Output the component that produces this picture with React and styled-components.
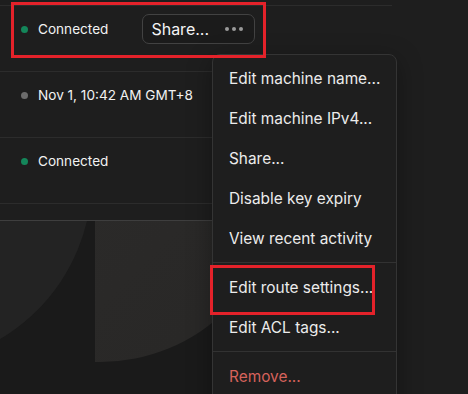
import React from "react";
import styled, { createGlobalStyle } from "styled-components";

const Global = createGlobalStyle`
  html, body { margin: 0; padding: 0; background: #1e1e1e; }
  body { font-family: Inter, "Noto Sans", "Liberation Sans", sans-serif; -webkit-font-smoothing: antialiased; }
  #root { width: 468px; height: 394px; overflow: hidden; }
`;

const Page = styled.div`
  position: relative;
  width: 468px;
  height: 394px;
  overflow: hidden;
  background: #1e1e1e;
  display: flex;
  flex-direction: column;
  padding-top: 5px;
  box-sizing: border-box;
`;

const Table = styled.div`
  width: 392px;
  display: flex;
  flex-direction: column;
`;

const Row = styled.div`
  height: 66px;
  box-sizing: border-box;
  border-top: 1px solid #2c2c2c;
  padding: 8px 0 0 21px;
`;

const Cell = styled.div`
  height: 30px;
  display: flex;
  align-items: center;
  gap: 10px;
`;

const Dot = styled.span`
  width: 7px;
  height: 7px;
  border-radius: 50%;
  background: ${(p) => (p.$online ? "#14865a" : "#6c6c6c")};
  flex: none;
`;

const Status = styled.span`
  font-size: 13.6px;
  color: #f2f2f2;
`;

const Spacer = styled.div`
  width: 14px;
`;

const ShareButton = styled.div`
  height: 30px;
  width: 113px;
  box-sizing: border-box;
  border: 1px solid #424242;
  border-radius: 7px;
  background: #1b1b1b;
  display: flex;
  align-items: center;
  padding: 0 11px 0 8px;
  justify-content: space-between;
  font-size: 16px;
  color: #f4f4f4;
`;

const Dots = styled.span`
  display: flex;
  gap: 3px;
  & > i {
    width: 4px;
    height: 4px;
    border-radius: 50%;
    background: #9a9a9a;
  }
`;

const Footer = styled.div`
  height: 16px;
  border-top: 1px solid #2c2c2c;
`;

const Canvas = styled.div`
  width: 392px;
  flex: 1;
  border-top: 1px solid #3e3e3e;
  background: #1a1a1a;
  overflow: hidden;
  & > svg { display: block; }
`;

const Menu = styled.div`
  position: absolute;
  left: 212px;
  top: 54px;
  width: 185px;
  height: 360px;
  box-sizing: border-box;
  background: #1e1e1e;
  border: 1px solid #343434;
  border-radius: 8px;
  padding-top: 3px;
  box-shadow: 0 6px 24px rgba(0, 0, 0, 0.35);
  display: flex;
  flex-direction: column;
`;

const Item = styled.div`
  height: 40px;
  flex: none;
  display: flex;
  align-items: center;
  padding: 0 16px;
  font-size: 15.4px;
  color: ${(p) => (p.$danger ? "#d6625b" : "#ececec")};
  white-space: nowrap;
`;

const Separator = styled.div`
  height: 1px;
  flex: none;
  background: #323232;
  margin: 4px 0;
`;

const Highlight = styled.div`
  position: absolute;
  left: ${(p) => p.$x}px;
  top: ${(p) => p.$y}px;
  width: ${(p) => p.$w}px;
  height: ${(p) => p.$h}px;
  box-sizing: border-box;
  border: 3px solid #e4222a;
  pointer-events: none;
`;

export default function App() {
  return (
    <>
      <Global />
      <Page>
        <Table>
          <Row>
            <Cell>
              <Dot $online />
              <Status>Connected</Status>
              <Spacer />
              <ShareButton>
                <span>Share...</span>
                <Dots>
                  <i />
                  <i />
                  <i />
                </Dots>
              </ShareButton>
            </Cell>
          </Row>
          <Row>
            <Cell>
              <Dot />
              <Status>Nov 1, 10:42 AM GMT+8</Status>
            </Cell>
          </Row>
          <Row>
            <Cell>
              <Dot $online />
              <Status>Connected</Status>
            </Cell>
          </Row>
          <Footer />
        </Table>
        <Canvas>
          <svg width="392" height="180" viewBox="0 0 392 180">
            <defs>
              <clipPath id="rightPanel">
                <rect x="95" y="0" width="300" height="180" />
              </clipPath>
              <linearGradient id="panelFill" x1="0" y1="0" x2="1" y2="1">
                <stop offset="0" stopColor="#2e2d2c" />
                <stop offset="1" stopColor="#282726" />
              </linearGradient>
            </defs>
            <circle cx="-95" cy="-43" r="187" fill="#232323" />
            <circle cx="100" cy="-39" r="180" fill="url(#panelFill)" clipPath="url(#rightPanel)" />
          </svg>
        </Canvas>

        <Menu>
          <Item>Edit machine name...</Item>
          <Item>Edit machine IPv4...</Item>
          <Item>Share...</Item>
          <Item>Disable key expiry</Item>
          <Item>View recent activity</Item>
          <Separator />
          <Item>Edit route settings...</Item>
          <Item>Edit ACL tags...</Item>
          <Separator />
          <Item $danger>Remove...</Item>
        </Menu>

        <Highlight $x={11} $y={2} $w={255} $h={56} />
        <Highlight $x={210} $y={265} $w={165} $h={50} />
      </Page>
    </>
  );
}
